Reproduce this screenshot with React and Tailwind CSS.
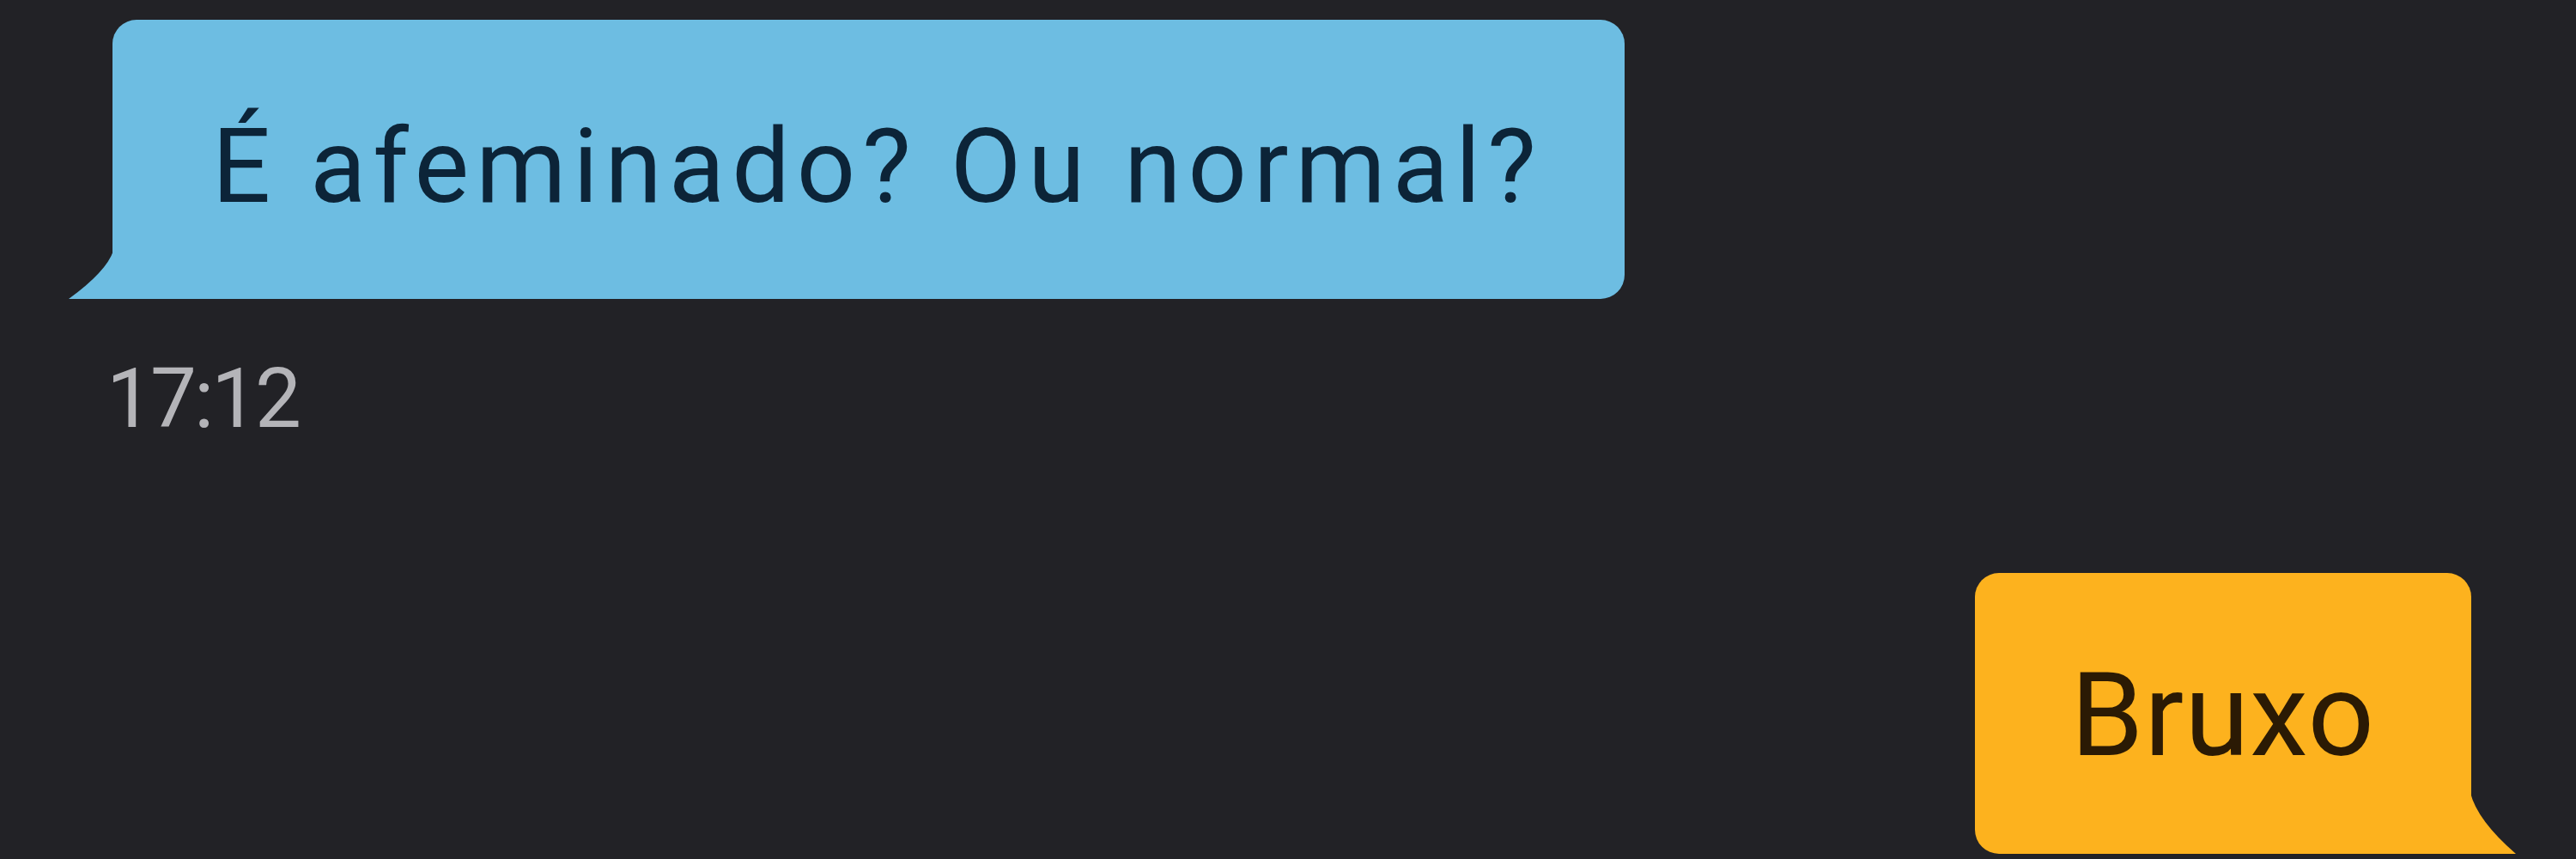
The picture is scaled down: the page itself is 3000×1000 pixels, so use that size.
const bubbleFont = { fontFamily: "Roboto, 'Liberation Sans', sans-serif" };

function IncomingTail() {
  return (
    <svg
      className="absolute bottom-0 -left-[51px]"
      width="52"
      height="56"
      viewBox="0 0 52 56"
    >
      <path d="M52 0 L52 56 L0 56 Q44 24 52 0 Z" fill="#6dbde2" />
    </svg>
  );
}

function OutgoingTail() {
  return (
    <svg
      className="absolute bottom-0 -right-[52px]"
      width="53"
      height="71"
      viewBox="0 0 53 71"
    >
      <path d="M0 0 L0 71 L53 71 Q8 32 0 0 Z" fill="#fdb21e" />
    </svg>
  );
}

export default function App() {
  return (
    <div className="w-[3000px] h-[1000px] bg-[#222226] overflow-hidden flex flex-col" style={bubbleFont}>
      <div className="pl-[124px] pt-[23px]">
        <div className="relative ml-[7px] inline-flex items-center h-[325px] pt-[16px] pl-[116px] pr-[95px] bg-[#6dbde2] rounded-[28px] rounded-bl-none">
          <span className="text-[120px] leading-none text-[#0c2438] tracking-[8px]">
            É afeminado? Ou normal?
          </span>
          <IncomingTail />
        </div>
        <div className="mt-[68px] text-[96px] leading-none text-[#b4b4b8] tracking-[-3px]">
          17:12
        </div>
      </div>
      <div className="flex justify-end pr-[122px] mt-[155px]">
        <div className="relative inline-flex items-center h-[327px] pt-[4px] px-[112px] bg-[#fdb21e] rounded-[28px] rounded-br-none">
          <span className="text-[136px] leading-none text-[#2b1a04] tracking-[1px]">
            Bruxo
          </span>
          <OutgoingTail />
        </div>
      </div>
    </div>
  );
}
